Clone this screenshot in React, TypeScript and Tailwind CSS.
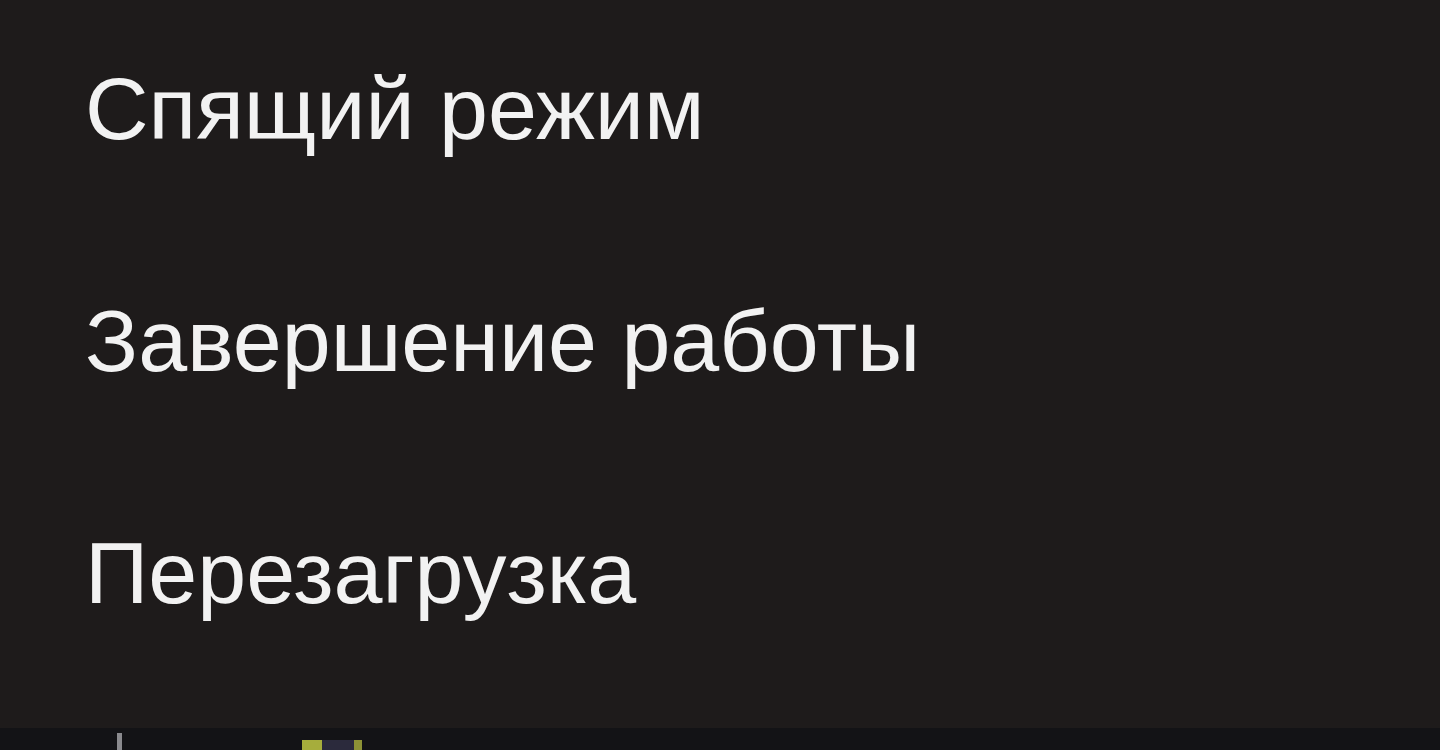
export default function App() {
  const items = ["Спящий режим", "Завершение работы", "Перезагрузка"];
  return (
    <div className="flex h-[750px] w-[1440px] flex-col overflow-hidden bg-[#1e1b1b] font-['Liberation_Sans',Arial,sans-serif]">
      <div className="flex flex-1 flex-col gap-[144px] pl-[85px] pt-[65px]">
        {items.map((item) => (
          <div key={item} className="text-[88px] leading-none text-[#f2f2f2]">
            {item}
          </div>
        ))}
      </div>
      <div className="flex h-[22px] items-end bg-[#131316]">
        <div className="ml-[117px] h-[17px] w-[5px] bg-[#8a8a8e]" />
        <div className="ml-[180px] flex h-[10px] w-[60px]">
          <div className="w-[20px] bg-[#a6ad3c]" />
          <div className="w-[32px] bg-[#2b2a3c]" />
          <div className="w-[8px] bg-[#8d9236]" />
        </div>
      </div>
    </div>
  );
}
